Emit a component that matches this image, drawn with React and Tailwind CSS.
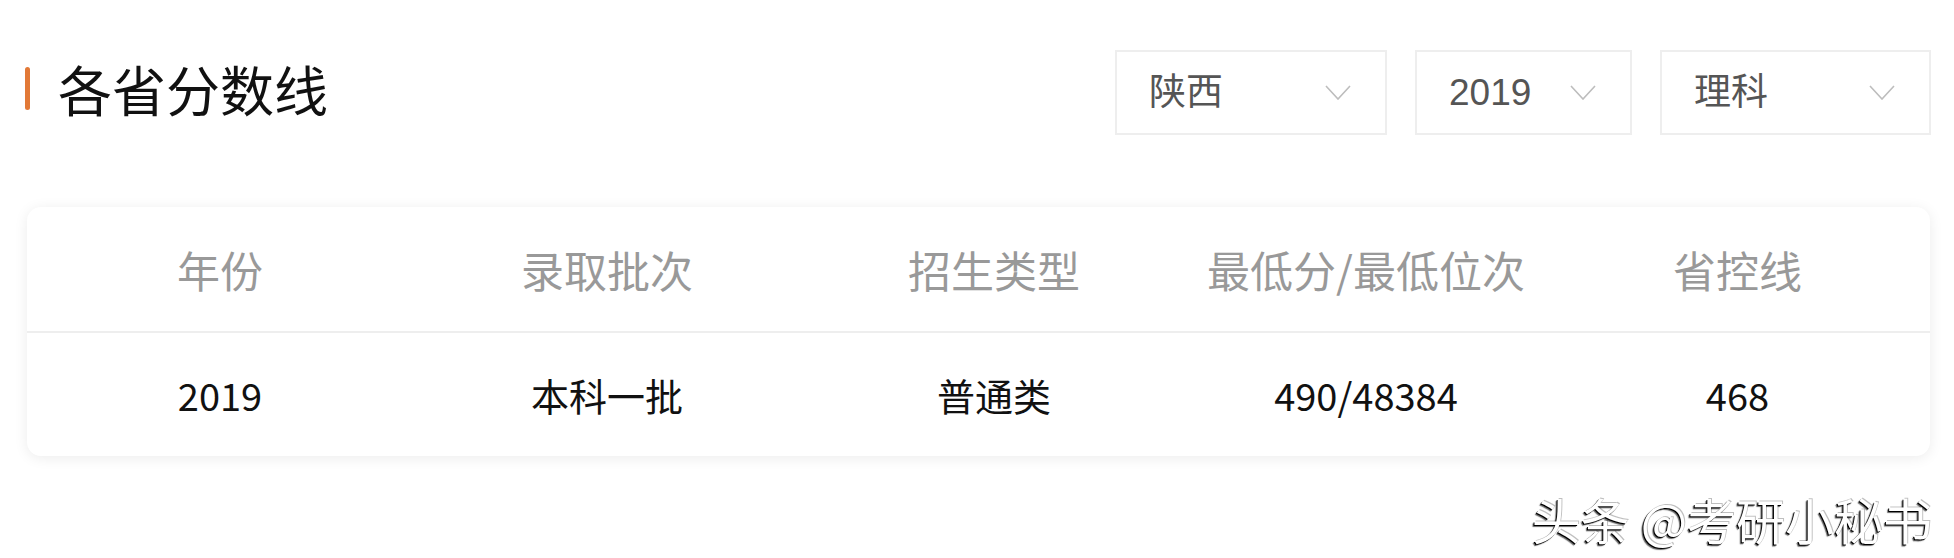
import React from "react";

const selects = [
  { label: "陕西", width: "w-[272px]" },
  { label: "2019", width: "w-[217px]" },
  { label: "理科", width: "w-[271px]" },
];

const columns = ["年份", "录取批次", "招生类型", "最低分/最低位次", "省控线"];
const rows = [["2019", "本科一批", "普通类", "490/48384", "468"]];

function Chevron() {
  return (
    <svg width="26" height="15" viewBox="0 0 26 15" fill="none">
      <path d="M1 1l12 13L25 1" stroke="#bdbdbd" strokeWidth="1.6" />
    </svg>
  );
}

function App() {
  return (
    <div className="w-[1954px] h-[558px] bg-white overflow-hidden font-['Liberation_Sans','Noto_Sans_CJK_SC',sans-serif]">
      <div className="flex items-center justify-between pt-[50px] pr-[23px]">
        <div className="flex items-center pl-[25px] -mt-[8px]">
          <div className="w-[5px] h-[43px] bg-[#e27937] rounded-full" />
          <h1 className="ml-[28px] text-[54px] leading-none text-[#111] font-['Noto_Sans_CJK_SC',sans-serif]">
            各省分数线
          </h1>
        </div>
        <div className="flex gap-[28px]">
          {selects.map((s) => (
            <div
              key={s.label}
              className={`${s.width} h-[85px] border-2 border-[#eeeeee] flex items-center justify-between pl-[32px] pr-[34px]`}
            >
              <span className="text-[37px] text-[#555] leading-none">{s.label}</span>
              <Chevron />
            </div>
          ))}
        </div>
      </div>

      <div className="mt-[72px] ml-[27px] w-[1903px] bg-white rounded-[14px] shadow-[0_2px_14px_rgba(0,0,0,0.08)] font-['Noto_Sans_CJK_SC',sans-serif]">
        <div className="grid grid-cols-[386px_388px_386px_358px_1fr] h-[126px] items-center border-b-2 border-[#eeeeee] text-[43px] text-[#999] text-center">
          {columns.map((c) => (
            <div key={c}>{c}</div>
          ))}
        </div>
        {rows.map((r, i) => (
          <div
            key={i}
            className="grid grid-cols-[386px_388px_386px_358px_1fr] h-[123px] items-center text-[38px] text-[#111] text-center"
          >
            {r.map((v, j) => (
              <div key={j}>{v}</div>
            ))}
          </div>
        ))}
      </div>

      <div className="flex justify-end pr-[22px] mt-[38px]">
        <span className="text-[49px] leading-none text-white font-['Noto_Sans_CJK_SC',sans-serif] [text-shadow:-1px_1px_0_#000,-2px_2px_1px_rgba(0,0,0,0.6),1px_-1px_0_rgba(0,0,0,0.25)]">
          头条 @考研小秘书
        </span>
      </div>
    </div>
  );
}

export default App;
